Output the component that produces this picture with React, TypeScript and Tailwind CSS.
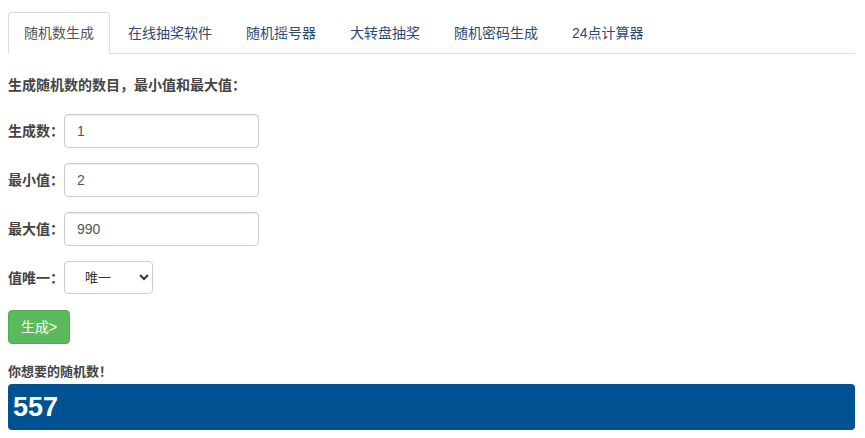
import {useState} from 'react'

const tabs = ['随机数生成', '在线抽奖软件', '随机摇号器', '大转盘抽奖', '随机密码生成', '24点计算器']

const font = {fontFamily: '"Liberation Sans", "Noto Sans CJK SC", sans-serif'}

const fields = [
  {label: '生成数：', value: '1'},
  {label: '最小值：', value: '2'},
  {label: '最大值：', value: '990'}
]

export default function App() {
  const [active, setActive] = useState(0)

  return (
    <div className="min-h-[438px] bg-white pl-2 pr-[10px] pt-3 text-sm text-[#333]" style={font}>
      <ul className="flex border-b border-[#ddd]">
        {tabs.map((t, i) => (
          <li key={t} className="-mb-px mr-[2px]">
            <button
              onClick={() => setActive(i)}
              className={
                i === active
                  ? 'block rounded-t border border-[#ddd] border-b-white bg-white px-[15px] py-[10px] leading-5 text-[#555]'
                  : 'block rounded-t border border-transparent px-[15px] py-[10px] leading-5 text-[#2c4a72] hover:bg-[#eee]'
              }
            >
              {t}
            </button>
          </li>
        ))}
      </ul>

      <p className="mt-[21px] font-bold leading-5 text-[#444]">生成随机数的数目，最小值和最大值：</p>

      <div className="mt-[19px] flex flex-col gap-[15px]">
        {fields.map(f => (
          <div key={f.label} className="flex items-center">
            <label className="w-14 font-bold text-[#444]">{f.label}</label>
            <input
              defaultValue={f.value}
              className="h-[34px] w-[195px] rounded border border-[#ccc] px-3 text-sm text-[#555] shadow-[inset_0_1px_1px_rgba(0,0,0,0.075)] outline-none"
            />
          </div>
        ))}
        <div className="flex items-center">
          <label className="w-14 font-bold text-[#444]">值唯一：</label>
          <select className="h-[33px] w-[89px] rounded border border-[#ccc] bg-white pl-4 text-[13px] text-[#333] outline-none">
            <option>唯一</option>
            <option>不唯一</option>
          </select>
        </div>
      </div>

      <button className="mt-4 h-[34px] rounded border border-[#4cae4c] bg-[#5cb85c] px-3 text-sm text-white">
        生成&gt;
      </button>

      <p className="mt-[18px] text-[13px] font-bold leading-5 text-[#444]">你想要的随机数！</p>

      <div className="mt-[2px] flex h-[46px] items-center rounded bg-[#005293] pl-[5px] text-[27px] font-bold text-white">
        557
      </div>
    </div>
  )
}
